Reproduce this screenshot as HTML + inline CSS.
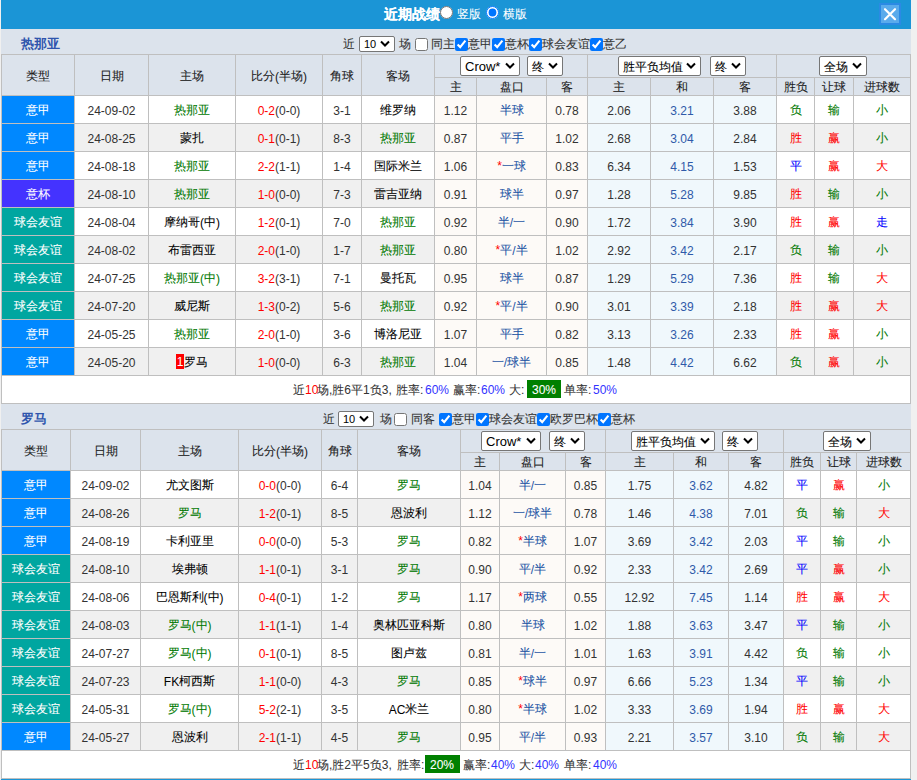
<!DOCTYPE html>
<html><head><meta charset="utf-8">
<style>
html,body{margin:0;padding:0;}
body{width:917px;height:780px;background:#f0f0f0;position:relative;overflow:hidden;font-family:"Liberation Sans",sans-serif;font-size:12px;color:#333;-webkit-text-stroke:0.08px;}
#panel{position:absolute;left:1px;top:0;width:910px;height:780px;background:#dce3ec;}
#title{position:absolute;left:1px;top:0;width:910px;height:29px;background:#1b95d6;}
.g{position:absolute;background:#bfbfbf;}
.c{position:absolute;text-align:center;white-space:nowrap;overflow:hidden;color:#000;}
.h{color:#1a1a1a;}
.d{color:#333;}
.t{font-weight:normal;position:relative;top:1px;}
.n{font-style:normal;position:relative;top:1px;-webkit-text-stroke:0;}
.sel{position:absolute;box-sizing:border-box;border:1px solid #767676;border-radius:2px;background:#fff;color:#000;white-space:nowrap;}
.sel span{position:absolute;top:0;}
.lat{-webkit-text-stroke:0;}
.sel svg{position:absolute;}
.lg{color:#fff;}
.pk{color:#1e55a5;}
.hb{color:#2f5aa9;}
.rk{display:inline-block;background:#ff0000;color:#fff;width:8px;height:15px;line-height:15px;vertical-align:middle;position:relative;top:-1px;}
.rk .n{top:1px;}
.a{position:absolute;white-space:nowrap;}
select{position:absolute;margin:0;font-family:"Liberation Sans",sans-serif;font-size:12px;padding:0 0 0 2px;color:#000;background:#fff;border:1px solid #767676;border-radius:3px;}
input{position:absolute;margin:0;width:13px;height:13px;}
.sm{text-align:center;}
.box{display:inline-block;background:#007800;color:#fff;padding:0 4px;height:17px;line-height:17px;}
.bl{color:#3333ff;}
.ast{color:#ff0000;top:-1px !important;}
.sx .n{top:0px;}
</style></head><body>
<div id="panel"></div>
<div id="title"></div>

<div class="a" style="left:384px;top:6px;font-size:14px;font-weight:bold;color:#fff;line-height:16px">近期战绩</div>
<input type="radio" style="left:440px;top:6px">
<div class="a" style="left:457px;top:6px;color:#fff;line-height:16px">竖版</div>
<input type="radio" checked style="left:486px;top:6px">
<div class="a" style="left:503px;top:6px;color:#fff;line-height:16px">横版</div>
<div class="a" style="left:879px;top:3px;width:22px;height:22px;box-sizing:border-box;background:#5aabec;border:2px solid #2b8ae4"></div>
<svg class="a" style="left:879px;top:3px" width="22" height="22" viewBox="0 0 22 22"><path d="M6 6.2 L16 16.2 M16 6.2 L6 16.2" stroke="#fff" stroke-width="2.2" stroke-linecap="round"/></svg>
<div class="a" style="left:21px;top:36px;font-size:13px;font-weight:bold;color:#2f55ad;line-height:16px;-webkit-text-stroke:0">热那亚</div>
<div class="a" style="left:343px;top:36px;line-height:16px">近</div>
<div class="sel" style="left:359px;top:36px;width:36px;height:16px;font-size:11px;line-height:14px"><span style="left:4px;top:0px;"><i class="lat" style="font-style:normal">10</i></span><svg style="left:20px;top:3px" width="10" height="8" viewBox="0 0 10 8"><path d="M1 1.5 L5 5.5 L9 1.5" fill="none" stroke="#000" stroke-width="2"/></svg></div>
<div class="a" style="left:399px;top:36px;line-height:16px">场</div>
<input type="checkbox" style="left:415px;top:38px">
<div class="a" style="left:431px;top:36px;line-height:16px">同主</div>
<input type="checkbox" checked style="left:455px;top:38px">
<div class="a" style="left:468px;top:36px;line-height:16px">意甲</div>
<input type="checkbox" checked style="left:492px;top:38px">
<div class="a" style="left:505px;top:36px;line-height:16px">意杯</div>
<input type="checkbox" checked style="left:529px;top:38px">
<div class="a" style="left:542px;top:36px;line-height:16px">球会友谊</div>
<input type="checkbox" checked style="left:590px;top:38px">
<div class="a" style="left:603px;top:36px;line-height:16px">意乙</div>
<div class="g" style="left:1px;top:54px;width:910px;height:350px"></div>
<div class="c h" style="left:2px;top:55px;width:72px;height:40px;line-height:40px;background:#dce3ec;"><b class="t">类型</b></div>
<div class="c h" style="left:75px;top:55px;width:73px;height:40px;line-height:40px;background:#dce3ec;"><b class="t">日期</b></div>
<div class="c h" style="left:149px;top:55px;width:86px;height:40px;line-height:40px;background:#dce3ec;"><b class="t">主场</b></div>
<div class="c h" style="left:236px;top:55px;width:86px;height:40px;line-height:40px;background:#dce3ec;"><b class="t">比分<i class="n">(</i>半场<i class="n">)</i></b></div>
<div class="c h" style="left:323px;top:55px;width:38px;height:40px;line-height:40px;background:#dce3ec;"><b class="t">角球</b></div>
<div class="c h" style="left:362px;top:55px;width:72px;height:40px;line-height:40px;background:#dce3ec;"><b class="t">客场</b></div>
<div class="c h" style="left:435px;top:55px;width:152px;height:22px;line-height:22px;background:#dce3ec;"><b class="t"></b></div>
<div class="c h" style="left:588px;top:55px;width:188px;height:22px;line-height:22px;background:#dce3ec;"><b class="t"></b></div>
<div class="c h" style="left:777px;top:55px;width:133px;height:22px;line-height:22px;background:#dce3ec;"><b class="t"></b></div>
<div class="c h s" style="left:435px;top:78px;width:41px;height:17px;line-height:17px;background:#dce3ec;"><b class="t">主</b></div>
<div class="c h s" style="left:477px;top:78px;width:69px;height:17px;line-height:17px;background:#dce3ec;"><b class="t">盘口</b></div>
<div class="c h s" style="left:547px;top:78px;width:40px;height:17px;line-height:17px;background:#dce3ec;"><b class="t">客</b></div>
<div class="c h s" style="left:588px;top:78px;width:62px;height:17px;line-height:17px;background:#dce3ec;"><b class="t">主</b></div>
<div class="c h s" style="left:651px;top:78px;width:62px;height:17px;line-height:17px;background:#dce3ec;"><b class="t">和</b></div>
<div class="c h s" style="left:714px;top:78px;width:62px;height:17px;line-height:17px;background:#dce3ec;"><b class="t">客</b></div>
<div class="c h s" style="left:777px;top:78px;width:37px;height:17px;line-height:17px;background:#dce3ec;"><b class="t">胜负</b></div>
<div class="c h s" style="left:815px;top:78px;width:38px;height:17px;line-height:17px;background:#dce3ec;"><b class="t">让球</b></div>
<div class="c h s" style="left:854px;top:78px;width:56px;height:17px;line-height:17px;background:#dce3ec;"><b class="t">进球数</b></div>
<div class="c lg" style="left:2px;top:96px;width:72px;height:27px;line-height:27px;background:#0088ff;"><b class="t">意甲</b></div>
<div class="c d" style="left:75px;top:96px;width:73px;height:27px;line-height:27px;background:#ffffff;"><b class="t"><i class="n">24-09-02</i></b></div>
<div class="c" style="left:149px;top:96px;width:86px;height:27px;line-height:27px;background:#ffffff;"><b class="t"><span style="color:#007800">热那亚</span></b></div>
<div class="c d" style="left:236px;top:96px;width:86px;height:27px;line-height:27px;background:#ffffff;"><b class="t"><span style="color:#ff0000"><i class="n">0-2</i></span><i class="n">(0-0)</i></b></div>
<div class="c d" style="left:323px;top:96px;width:38px;height:27px;line-height:27px;background:#ffffff;"><b class="t"><i class="n">3-1</i></b></div>
<div class="c" style="left:362px;top:96px;width:72px;height:27px;line-height:27px;background:#ffffff;"><b class="t">维罗纳</b></div>
<div class="c d" style="left:435px;top:96px;width:41px;height:27px;line-height:27px;background:#fdfaf7;"><b class="t"><i class="n">1.12</i></b></div>
<div class="c pk" style="left:477px;top:96px;width:69px;height:27px;line-height:27px;background:#fdfaf7;"><b class="t">半球</b></div>
<div class="c d" style="left:547px;top:96px;width:40px;height:27px;line-height:27px;background:#fdfaf7;"><b class="t"><i class="n">0.78</i></b></div>
<div class="c d" style="left:588px;top:96px;width:62px;height:27px;line-height:27px;background:#f0f8fc;"><b class="t"><i class="n">2.06</i></b></div>
<div class="c hb" style="left:651px;top:96px;width:62px;height:27px;line-height:27px;background:#f0f8fc;"><b class="t"><i class="n">3.21</i></b></div>
<div class="c d" style="left:714px;top:96px;width:62px;height:27px;line-height:27px;background:#f0f8fc;"><b class="t"><i class="n">3.88</i></b></div>
<div class="c" style="left:777px;top:96px;width:37px;height:27px;line-height:27px;background:#ffffff;"><b class="t"><span style="color:#007800">负</span></b></div>
<div class="c" style="left:815px;top:96px;width:38px;height:27px;line-height:27px;background:#ffffff;"><b class="t"><span style="color:#007800">输</span></b></div>
<div class="c" style="left:854px;top:96px;width:56px;height:27px;line-height:27px;background:#ffffff;"><b class="t"><span style="color:#007800">小</span></b></div>
<div class="c lg" style="left:2px;top:124px;width:72px;height:27px;line-height:27px;background:#0088ff;"><b class="t">意甲</b></div>
<div class="c d" style="left:75px;top:124px;width:73px;height:27px;line-height:27px;background:#f0f0f0;"><b class="t"><i class="n">24-08-25</i></b></div>
<div class="c" style="left:149px;top:124px;width:86px;height:27px;line-height:27px;background:#f0f0f0;"><b class="t">蒙扎</b></div>
<div class="c d" style="left:236px;top:124px;width:86px;height:27px;line-height:27px;background:#f0f0f0;"><b class="t"><span style="color:#ff0000"><i class="n">0-1</i></span><i class="n">(0-1)</i></b></div>
<div class="c d" style="left:323px;top:124px;width:38px;height:27px;line-height:27px;background:#f0f0f0;"><b class="t"><i class="n">8-3</i></b></div>
<div class="c" style="left:362px;top:124px;width:72px;height:27px;line-height:27px;background:#f0f0f0;"><b class="t"><span style="color:#007800">热那亚</span></b></div>
<div class="c d" style="left:435px;top:124px;width:41px;height:27px;line-height:27px;background:#fdfaf7;"><b class="t"><i class="n">0.87</i></b></div>
<div class="c pk" style="left:477px;top:124px;width:69px;height:27px;line-height:27px;background:#fdfaf7;"><b class="t">平手</b></div>
<div class="c d" style="left:547px;top:124px;width:40px;height:27px;line-height:27px;background:#fdfaf7;"><b class="t"><i class="n">1.02</i></b></div>
<div class="c d" style="left:588px;top:124px;width:62px;height:27px;line-height:27px;background:#f0f8fc;"><b class="t"><i class="n">2.68</i></b></div>
<div class="c hb" style="left:651px;top:124px;width:62px;height:27px;line-height:27px;background:#f0f8fc;"><b class="t"><i class="n">3.04</i></b></div>
<div class="c d" style="left:714px;top:124px;width:62px;height:27px;line-height:27px;background:#f0f8fc;"><b class="t"><i class="n">2.84</i></b></div>
<div class="c" style="left:777px;top:124px;width:37px;height:27px;line-height:27px;background:#f0f0f0;"><b class="t"><span style="color:#ff0000">胜</span></b></div>
<div class="c" style="left:815px;top:124px;width:38px;height:27px;line-height:27px;background:#f0f0f0;"><b class="t"><span style="color:#ff0000">赢</span></b></div>
<div class="c" style="left:854px;top:124px;width:56px;height:27px;line-height:27px;background:#f0f0f0;"><b class="t"><span style="color:#007800">小</span></b></div>
<div class="c lg" style="left:2px;top:152px;width:72px;height:27px;line-height:27px;background:#0088ff;"><b class="t">意甲</b></div>
<div class="c d" style="left:75px;top:152px;width:73px;height:27px;line-height:27px;background:#ffffff;"><b class="t"><i class="n">24-08-18</i></b></div>
<div class="c" style="left:149px;top:152px;width:86px;height:27px;line-height:27px;background:#ffffff;"><b class="t"><span style="color:#007800">热那亚</span></b></div>
<div class="c d" style="left:236px;top:152px;width:86px;height:27px;line-height:27px;background:#ffffff;"><b class="t"><span style="color:#ff0000"><i class="n">2-2</i></span><i class="n">(1-1)</i></b></div>
<div class="c d" style="left:323px;top:152px;width:38px;height:27px;line-height:27px;background:#ffffff;"><b class="t"><i class="n">1-4</i></b></div>
<div class="c" style="left:362px;top:152px;width:72px;height:27px;line-height:27px;background:#ffffff;"><b class="t">国际米兰</b></div>
<div class="c d" style="left:435px;top:152px;width:41px;height:27px;line-height:27px;background:#fdfaf7;"><b class="t"><i class="n">1.06</i></b></div>
<div class="c pk" style="left:477px;top:152px;width:69px;height:27px;line-height:27px;background:#fdfaf7;"><b class="t"><i class="n ast"><i class="n">*</i></i>一球</b></div>
<div class="c d" style="left:547px;top:152px;width:40px;height:27px;line-height:27px;background:#fdfaf7;"><b class="t"><i class="n">0.83</i></b></div>
<div class="c d" style="left:588px;top:152px;width:62px;height:27px;line-height:27px;background:#f0f8fc;"><b class="t"><i class="n">6.34</i></b></div>
<div class="c hb" style="left:651px;top:152px;width:62px;height:27px;line-height:27px;background:#f0f8fc;"><b class="t"><i class="n">4.15</i></b></div>
<div class="c d" style="left:714px;top:152px;width:62px;height:27px;line-height:27px;background:#f0f8fc;"><b class="t"><i class="n">1.53</i></b></div>
<div class="c" style="left:777px;top:152px;width:37px;height:27px;line-height:27px;background:#ffffff;"><b class="t"><span style="color:#0000ff">平</span></b></div>
<div class="c" style="left:815px;top:152px;width:38px;height:27px;line-height:27px;background:#ffffff;"><b class="t"><span style="color:#ff0000">赢</span></b></div>
<div class="c" style="left:854px;top:152px;width:56px;height:27px;line-height:27px;background:#ffffff;"><b class="t"><span style="color:#ff0000">大</span></b></div>
<div class="c lg" style="left:2px;top:180px;width:72px;height:27px;line-height:27px;background:#4433ff;"><b class="t">意杯</b></div>
<div class="c d" style="left:75px;top:180px;width:73px;height:27px;line-height:27px;background:#f0f0f0;"><b class="t"><i class="n">24-08-10</i></b></div>
<div class="c" style="left:149px;top:180px;width:86px;height:27px;line-height:27px;background:#f0f0f0;"><b class="t"><span style="color:#007800">热那亚</span></b></div>
<div class="c d" style="left:236px;top:180px;width:86px;height:27px;line-height:27px;background:#f0f0f0;"><b class="t"><span style="color:#ff0000"><i class="n">1-0</i></span><i class="n">(0-0)</i></b></div>
<div class="c d" style="left:323px;top:180px;width:38px;height:27px;line-height:27px;background:#f0f0f0;"><b class="t"><i class="n">7-3</i></b></div>
<div class="c" style="left:362px;top:180px;width:72px;height:27px;line-height:27px;background:#f0f0f0;"><b class="t">雷吉亚纳</b></div>
<div class="c d" style="left:435px;top:180px;width:41px;height:27px;line-height:27px;background:#fdfaf7;"><b class="t"><i class="n">0.91</i></b></div>
<div class="c pk" style="left:477px;top:180px;width:69px;height:27px;line-height:27px;background:#fdfaf7;"><b class="t">球半</b></div>
<div class="c d" style="left:547px;top:180px;width:40px;height:27px;line-height:27px;background:#fdfaf7;"><b class="t"><i class="n">0.97</i></b></div>
<div class="c d" style="left:588px;top:180px;width:62px;height:27px;line-height:27px;background:#f0f8fc;"><b class="t"><i class="n">1.28</i></b></div>
<div class="c hb" style="left:651px;top:180px;width:62px;height:27px;line-height:27px;background:#f0f8fc;"><b class="t"><i class="n">5.28</i></b></div>
<div class="c d" style="left:714px;top:180px;width:62px;height:27px;line-height:27px;background:#f0f8fc;"><b class="t"><i class="n">9.85</i></b></div>
<div class="c" style="left:777px;top:180px;width:37px;height:27px;line-height:27px;background:#f0f0f0;"><b class="t"><span style="color:#ff0000">胜</span></b></div>
<div class="c" style="left:815px;top:180px;width:38px;height:27px;line-height:27px;background:#f0f0f0;"><b class="t"><span style="color:#007800">输</span></b></div>
<div class="c" style="left:854px;top:180px;width:56px;height:27px;line-height:27px;background:#f0f0f0;"><b class="t"><span style="color:#007800">小</span></b></div>
<div class="c lg" style="left:2px;top:208px;width:72px;height:27px;line-height:27px;background:#00a6a0;"><b class="t">球会友谊</b></div>
<div class="c d" style="left:75px;top:208px;width:73px;height:27px;line-height:27px;background:#ffffff;"><b class="t"><i class="n">24-08-04</i></b></div>
<div class="c" style="left:149px;top:208px;width:86px;height:27px;line-height:27px;background:#ffffff;"><b class="t">摩纳哥<i class="n">(</i>中<i class="n">)</i></b></div>
<div class="c d" style="left:236px;top:208px;width:86px;height:27px;line-height:27px;background:#ffffff;"><b class="t"><span style="color:#ff0000"><i class="n">1-2</i></span><i class="n">(0-1)</i></b></div>
<div class="c d" style="left:323px;top:208px;width:38px;height:27px;line-height:27px;background:#ffffff;"><b class="t"><i class="n">7-0</i></b></div>
<div class="c" style="left:362px;top:208px;width:72px;height:27px;line-height:27px;background:#ffffff;"><b class="t"><span style="color:#007800">热那亚</span></b></div>
<div class="c d" style="left:435px;top:208px;width:41px;height:27px;line-height:27px;background:#fdfaf7;"><b class="t"><i class="n">0.92</i></b></div>
<div class="c pk" style="left:477px;top:208px;width:69px;height:27px;line-height:27px;background:#fdfaf7;"><b class="t">半<i class="n">/</i>一</b></div>
<div class="c d" style="left:547px;top:208px;width:40px;height:27px;line-height:27px;background:#fdfaf7;"><b class="t"><i class="n">0.90</i></b></div>
<div class="c d" style="left:588px;top:208px;width:62px;height:27px;line-height:27px;background:#f0f8fc;"><b class="t"><i class="n">1.72</i></b></div>
<div class="c hb" style="left:651px;top:208px;width:62px;height:27px;line-height:27px;background:#f0f8fc;"><b class="t"><i class="n">3.84</i></b></div>
<div class="c d" style="left:714px;top:208px;width:62px;height:27px;line-height:27px;background:#f0f8fc;"><b class="t"><i class="n">3.90</i></b></div>
<div class="c" style="left:777px;top:208px;width:37px;height:27px;line-height:27px;background:#ffffff;"><b class="t"><span style="color:#ff0000">胜</span></b></div>
<div class="c" style="left:815px;top:208px;width:38px;height:27px;line-height:27px;background:#ffffff;"><b class="t"><span style="color:#ff0000">赢</span></b></div>
<div class="c" style="left:854px;top:208px;width:56px;height:27px;line-height:27px;background:#ffffff;"><b class="t"><span style="color:#0000ff">走</span></b></div>
<div class="c lg" style="left:2px;top:236px;width:72px;height:27px;line-height:27px;background:#00a6a0;"><b class="t">球会友谊</b></div>
<div class="c d" style="left:75px;top:236px;width:73px;height:27px;line-height:27px;background:#f0f0f0;"><b class="t"><i class="n">24-08-02</i></b></div>
<div class="c" style="left:149px;top:236px;width:86px;height:27px;line-height:27px;background:#f0f0f0;"><b class="t">布雷西亚</b></div>
<div class="c d" style="left:236px;top:236px;width:86px;height:27px;line-height:27px;background:#f0f0f0;"><b class="t"><span style="color:#ff0000"><i class="n">2-0</i></span><i class="n">(1-0)</i></b></div>
<div class="c d" style="left:323px;top:236px;width:38px;height:27px;line-height:27px;background:#f0f0f0;"><b class="t"><i class="n">1-7</i></b></div>
<div class="c" style="left:362px;top:236px;width:72px;height:27px;line-height:27px;background:#f0f0f0;"><b class="t"><span style="color:#007800">热那亚</span></b></div>
<div class="c d" style="left:435px;top:236px;width:41px;height:27px;line-height:27px;background:#fdfaf7;"><b class="t"><i class="n">0.80</i></b></div>
<div class="c pk" style="left:477px;top:236px;width:69px;height:27px;line-height:27px;background:#fdfaf7;"><b class="t"><i class="n ast"><i class="n">*</i></i>平<i class="n">/</i>半</b></div>
<div class="c d" style="left:547px;top:236px;width:40px;height:27px;line-height:27px;background:#fdfaf7;"><b class="t"><i class="n">1.02</i></b></div>
<div class="c d" style="left:588px;top:236px;width:62px;height:27px;line-height:27px;background:#f0f8fc;"><b class="t"><i class="n">2.92</i></b></div>
<div class="c hb" style="left:651px;top:236px;width:62px;height:27px;line-height:27px;background:#f0f8fc;"><b class="t"><i class="n">3.42</i></b></div>
<div class="c d" style="left:714px;top:236px;width:62px;height:27px;line-height:27px;background:#f0f8fc;"><b class="t"><i class="n">2.17</i></b></div>
<div class="c" style="left:777px;top:236px;width:37px;height:27px;line-height:27px;background:#f0f0f0;"><b class="t"><span style="color:#007800">负</span></b></div>
<div class="c" style="left:815px;top:236px;width:38px;height:27px;line-height:27px;background:#f0f0f0;"><b class="t"><span style="color:#007800">输</span></b></div>
<div class="c" style="left:854px;top:236px;width:56px;height:27px;line-height:27px;background:#f0f0f0;"><b class="t"><span style="color:#007800">小</span></b></div>
<div class="c lg" style="left:2px;top:264px;width:72px;height:27px;line-height:27px;background:#00a6a0;"><b class="t">球会友谊</b></div>
<div class="c d" style="left:75px;top:264px;width:73px;height:27px;line-height:27px;background:#ffffff;"><b class="t"><i class="n">24-07-25</i></b></div>
<div class="c" style="left:149px;top:264px;width:86px;height:27px;line-height:27px;background:#ffffff;"><b class="t"><span style="color:#007800">热那亚<i class="n">(</i>中<i class="n">)</i></span></b></div>
<div class="c d" style="left:236px;top:264px;width:86px;height:27px;line-height:27px;background:#ffffff;"><b class="t"><span style="color:#ff0000"><i class="n">3-2</i></span><i class="n">(3-1)</i></b></div>
<div class="c d" style="left:323px;top:264px;width:38px;height:27px;line-height:27px;background:#ffffff;"><b class="t"><i class="n">7-1</i></b></div>
<div class="c" style="left:362px;top:264px;width:72px;height:27px;line-height:27px;background:#ffffff;"><b class="t">曼托瓦</b></div>
<div class="c d" style="left:435px;top:264px;width:41px;height:27px;line-height:27px;background:#fdfaf7;"><b class="t"><i class="n">0.95</i></b></div>
<div class="c pk" style="left:477px;top:264px;width:69px;height:27px;line-height:27px;background:#fdfaf7;"><b class="t">球半</b></div>
<div class="c d" style="left:547px;top:264px;width:40px;height:27px;line-height:27px;background:#fdfaf7;"><b class="t"><i class="n">0.87</i></b></div>
<div class="c d" style="left:588px;top:264px;width:62px;height:27px;line-height:27px;background:#f0f8fc;"><b class="t"><i class="n">1.29</i></b></div>
<div class="c hb" style="left:651px;top:264px;width:62px;height:27px;line-height:27px;background:#f0f8fc;"><b class="t"><i class="n">5.29</i></b></div>
<div class="c d" style="left:714px;top:264px;width:62px;height:27px;line-height:27px;background:#f0f8fc;"><b class="t"><i class="n">7.36</i></b></div>
<div class="c" style="left:777px;top:264px;width:37px;height:27px;line-height:27px;background:#ffffff;"><b class="t"><span style="color:#ff0000">胜</span></b></div>
<div class="c" style="left:815px;top:264px;width:38px;height:27px;line-height:27px;background:#ffffff;"><b class="t"><span style="color:#007800">输</span></b></div>
<div class="c" style="left:854px;top:264px;width:56px;height:27px;line-height:27px;background:#ffffff;"><b class="t"><span style="color:#ff0000">大</span></b></div>
<div class="c lg" style="left:2px;top:292px;width:72px;height:27px;line-height:27px;background:#00a6a0;"><b class="t">球会友谊</b></div>
<div class="c d" style="left:75px;top:292px;width:73px;height:27px;line-height:27px;background:#f0f0f0;"><b class="t"><i class="n">24-07-20</i></b></div>
<div class="c" style="left:149px;top:292px;width:86px;height:27px;line-height:27px;background:#f0f0f0;"><b class="t">威尼斯</b></div>
<div class="c d" style="left:236px;top:292px;width:86px;height:27px;line-height:27px;background:#f0f0f0;"><b class="t"><span style="color:#ff0000"><i class="n">1-3</i></span><i class="n">(0-2)</i></b></div>
<div class="c d" style="left:323px;top:292px;width:38px;height:27px;line-height:27px;background:#f0f0f0;"><b class="t"><i class="n">5-6</i></b></div>
<div class="c" style="left:362px;top:292px;width:72px;height:27px;line-height:27px;background:#f0f0f0;"><b class="t"><span style="color:#007800">热那亚</span></b></div>
<div class="c d" style="left:435px;top:292px;width:41px;height:27px;line-height:27px;background:#fdfaf7;"><b class="t"><i class="n">0.92</i></b></div>
<div class="c pk" style="left:477px;top:292px;width:69px;height:27px;line-height:27px;background:#fdfaf7;"><b class="t"><i class="n ast"><i class="n">*</i></i>平<i class="n">/</i>半</b></div>
<div class="c d" style="left:547px;top:292px;width:40px;height:27px;line-height:27px;background:#fdfaf7;"><b class="t"><i class="n">0.90</i></b></div>
<div class="c d" style="left:588px;top:292px;width:62px;height:27px;line-height:27px;background:#f0f8fc;"><b class="t"><i class="n">3.01</i></b></div>
<div class="c hb" style="left:651px;top:292px;width:62px;height:27px;line-height:27px;background:#f0f8fc;"><b class="t"><i class="n">3.39</i></b></div>
<div class="c d" style="left:714px;top:292px;width:62px;height:27px;line-height:27px;background:#f0f8fc;"><b class="t"><i class="n">2.18</i></b></div>
<div class="c" style="left:777px;top:292px;width:37px;height:27px;line-height:27px;background:#f0f0f0;"><b class="t"><span style="color:#ff0000">胜</span></b></div>
<div class="c" style="left:815px;top:292px;width:38px;height:27px;line-height:27px;background:#f0f0f0;"><b class="t"><span style="color:#ff0000">赢</span></b></div>
<div class="c" style="left:854px;top:292px;width:56px;height:27px;line-height:27px;background:#f0f0f0;"><b class="t"><span style="color:#ff0000">大</span></b></div>
<div class="c lg" style="left:2px;top:320px;width:72px;height:27px;line-height:27px;background:#0088ff;"><b class="t">意甲</b></div>
<div class="c d" style="left:75px;top:320px;width:73px;height:27px;line-height:27px;background:#ffffff;"><b class="t"><i class="n">24-05-25</i></b></div>
<div class="c" style="left:149px;top:320px;width:86px;height:27px;line-height:27px;background:#ffffff;"><b class="t"><span style="color:#007800">热那亚</span></b></div>
<div class="c d" style="left:236px;top:320px;width:86px;height:27px;line-height:27px;background:#ffffff;"><b class="t"><span style="color:#ff0000"><i class="n">2-0</i></span><i class="n">(1-0)</i></b></div>
<div class="c d" style="left:323px;top:320px;width:38px;height:27px;line-height:27px;background:#ffffff;"><b class="t"><i class="n">3-6</i></b></div>
<div class="c" style="left:362px;top:320px;width:72px;height:27px;line-height:27px;background:#ffffff;"><b class="t">博洛尼亚</b></div>
<div class="c d" style="left:435px;top:320px;width:41px;height:27px;line-height:27px;background:#fdfaf7;"><b class="t"><i class="n">1.07</i></b></div>
<div class="c pk" style="left:477px;top:320px;width:69px;height:27px;line-height:27px;background:#fdfaf7;"><b class="t">平手</b></div>
<div class="c d" style="left:547px;top:320px;width:40px;height:27px;line-height:27px;background:#fdfaf7;"><b class="t"><i class="n">0.82</i></b></div>
<div class="c d" style="left:588px;top:320px;width:62px;height:27px;line-height:27px;background:#f0f8fc;"><b class="t"><i class="n">3.13</i></b></div>
<div class="c hb" style="left:651px;top:320px;width:62px;height:27px;line-height:27px;background:#f0f8fc;"><b class="t"><i class="n">3.26</i></b></div>
<div class="c d" style="left:714px;top:320px;width:62px;height:27px;line-height:27px;background:#f0f8fc;"><b class="t"><i class="n">2.33</i></b></div>
<div class="c" style="left:777px;top:320px;width:37px;height:27px;line-height:27px;background:#ffffff;"><b class="t"><span style="color:#ff0000">胜</span></b></div>
<div class="c" style="left:815px;top:320px;width:38px;height:27px;line-height:27px;background:#ffffff;"><b class="t"><span style="color:#ff0000">赢</span></b></div>
<div class="c" style="left:854px;top:320px;width:56px;height:27px;line-height:27px;background:#ffffff;"><b class="t"><span style="color:#007800">小</span></b></div>
<div class="c lg" style="left:2px;top:348px;width:72px;height:27px;line-height:27px;background:#0088ff;"><b class="t">意甲</b></div>
<div class="c d" style="left:75px;top:348px;width:73px;height:27px;line-height:27px;background:#f0f0f0;"><b class="t"><i class="n">24-05-20</i></b></div>
<div class="c" style="left:149px;top:348px;width:86px;height:27px;line-height:27px;background:#f0f0f0;"><b class="t"><span class="rk"><i class="n">1</i></span>罗马</b></div>
<div class="c d" style="left:236px;top:348px;width:86px;height:27px;line-height:27px;background:#f0f0f0;"><b class="t"><span style="color:#ff0000"><i class="n">1-0</i></span><i class="n">(0-0)</i></b></div>
<div class="c d" style="left:323px;top:348px;width:38px;height:27px;line-height:27px;background:#f0f0f0;"><b class="t"><i class="n">6-3</i></b></div>
<div class="c" style="left:362px;top:348px;width:72px;height:27px;line-height:27px;background:#f0f0f0;"><b class="t"><span style="color:#007800">热那亚</span></b></div>
<div class="c d" style="left:435px;top:348px;width:41px;height:27px;line-height:27px;background:#fdfaf7;"><b class="t"><i class="n">1.04</i></b></div>
<div class="c pk" style="left:477px;top:348px;width:69px;height:27px;line-height:27px;background:#fdfaf7;"><b class="t">一<i class="n">/</i>球半</b></div>
<div class="c d" style="left:547px;top:348px;width:40px;height:27px;line-height:27px;background:#fdfaf7;"><b class="t"><i class="n">0.85</i></b></div>
<div class="c d" style="left:588px;top:348px;width:62px;height:27px;line-height:27px;background:#f0f8fc;"><b class="t"><i class="n">1.48</i></b></div>
<div class="c hb" style="left:651px;top:348px;width:62px;height:27px;line-height:27px;background:#f0f8fc;"><b class="t"><i class="n">4.42</i></b></div>
<div class="c d" style="left:714px;top:348px;width:62px;height:27px;line-height:27px;background:#f0f8fc;"><b class="t"><i class="n">6.62</i></b></div>
<div class="c" style="left:777px;top:348px;width:37px;height:27px;line-height:27px;background:#f0f0f0;"><b class="t"><span style="color:#007800">负</span></b></div>
<div class="c" style="left:815px;top:348px;width:38px;height:27px;line-height:27px;background:#f0f0f0;"><b class="t"><span style="color:#ff0000">赢</span></b></div>
<div class="c" style="left:854px;top:348px;width:56px;height:27px;line-height:27px;background:#f0f0f0;"><b class="t"><span style="color:#007800">小</span></b></div>
<div class="c sm" style="left:2px;top:376px;width:908px;height:27px;line-height:27px;background:#ffffff;"><b class="t"></b></div>
<div class="a sx" style="left:293px;top:381px;color:#333;line-height:18px">近</div>
<div class="a sx" style="left:305px;top:381px;color:#ff0000;line-height:18px"><i class="n">10</i></div>
<div class="a sx" style="left:317px;top:381px;color:#333;line-height:18px">场<i class="n">,</i>胜<i class="n">6</i>平<i class="n">1</i>负<i class="n">3,</i></div>
<div class="a sx" style="left:396px;top:381px;color:#333;line-height:18px">胜率<i class="n">:</i></div>
<div class="a sx" style="left:425px;top:381px;color:#3333ff;line-height:18px"><i class="n">60%</i></div>
<div class="a sx" style="left:453px;top:381px;color:#333;line-height:18px">赢率<i class="n">:</i></div>
<div class="a sx" style="left:481px;top:381px;color:#3333ff;line-height:18px"><i class="n">60%</i></div>
<div class="a sx" style="left:509px;top:381px;color:#333;line-height:18px">大<i class="n">:</i></div>
<div class="a" style="left:527px;top:380px;width:34px;height:18px;background:#008000"></div>
<div class="a sx" style="left:532px;top:381px;color:#fff;line-height:18px">30%</div>
<div class="a sx" style="left:564px;top:381px;color:#333;line-height:18px">单率<i class="n">:</i></div>
<div class="a sx" style="left:593px;top:381px;color:#3333ff;line-height:18px"><i class="n">50%</i></div>
<div class="sel" style="left:460px;top:56px;width:60px;height:20px;font-size:13px;line-height:18px"><span style="left:4px;top:1px;"><i class="lat" style="font-style:normal">Crow*</i></span><svg style="left:44px;top:5px" width="10" height="8" viewBox="0 0 10 8"><path d="M1 1.5 L5 5.5 L9 1.5" fill="none" stroke="#000" stroke-width="2"/></svg></div>
<div class="sel" style="left:527px;top:56px;width:36px;height:20px;font-size:12px;line-height:18px"><span style="left:4px;top:1px;">终</span><svg style="left:20px;top:5px" width="10" height="8" viewBox="0 0 10 8"><path d="M1 1.5 L5 5.5 L9 1.5" fill="none" stroke="#000" stroke-width="2"/></svg></div>
<div class="sel" style="left:618px;top:56px;width:83px;height:20px;font-size:12px;line-height:18px"><span style="left:4px;top:1px;">胜平负均值</span><svg style="left:67px;top:5px" width="10" height="8" viewBox="0 0 10 8"><path d="M1 1.5 L5 5.5 L9 1.5" fill="none" stroke="#000" stroke-width="2"/></svg></div>
<div class="sel" style="left:710px;top:56px;width:36px;height:20px;font-size:12px;line-height:18px"><span style="left:4px;top:1px;">终</span><svg style="left:20px;top:5px" width="10" height="8" viewBox="0 0 10 8"><path d="M1 1.5 L5 5.5 L9 1.5" fill="none" stroke="#000" stroke-width="2"/></svg></div>
<div class="sel" style="left:819px;top:56px;width:48px;height:20px;font-size:12px;line-height:18px"><span style="left:4px;top:1px;">全场</span><svg style="left:32px;top:5px" width="10" height="8" viewBox="0 0 10 8"><path d="M1 1.5 L5 5.5 L9 1.5" fill="none" stroke="#000" stroke-width="2"/></svg></div>
<div class="a" style="left:21px;top:411px;font-size:13px;font-weight:bold;color:#2f55ad;line-height:16px;-webkit-text-stroke:0">罗马</div>
<div class="a" style="left:323px;top:411px;line-height:16px">近</div>
<div class="sel" style="left:338px;top:411px;width:36px;height:16px;font-size:11px;line-height:14px"><span style="left:4px;top:0px;"><i class="lat" style="font-style:normal">10</i></span><svg style="left:20px;top:3px" width="10" height="8" viewBox="0 0 10 8"><path d="M1 1.5 L5 5.5 L9 1.5" fill="none" stroke="#000" stroke-width="2"/></svg></div>
<div class="a" style="left:380px;top:411px;line-height:16px">场</div>
<input type="checkbox" style="left:394px;top:413px">
<div class="a" style="left:411px;top:411px;line-height:16px">同客</div>
<input type="checkbox" checked style="left:439px;top:413px">
<div class="a" style="left:452px;top:411px;line-height:16px">意甲</div>
<input type="checkbox" checked style="left:476px;top:413px">
<div class="a" style="left:489px;top:411px;line-height:16px">球会友谊</div>
<input type="checkbox" checked style="left:537px;top:413px">
<div class="a" style="left:550px;top:411px;line-height:16px">欧罗巴杯</div>
<input type="checkbox" checked style="left:598px;top:413px">
<div class="a" style="left:611px;top:411px;line-height:16px">意杯</div>
<div class="g" style="left:1px;top:429px;width:910px;height:350px"></div>
<div class="c h" style="left:2px;top:430px;width:68px;height:40px;line-height:40px;background:#dce3ec;"><b class="t">类型</b></div>
<div class="c h" style="left:71px;top:430px;width:69px;height:40px;line-height:40px;background:#dce3ec;"><b class="t">日期</b></div>
<div class="c h" style="left:141px;top:430px;width:97px;height:40px;line-height:40px;background:#dce3ec;"><b class="t">主场</b></div>
<div class="c h" style="left:239px;top:430px;width:82px;height:40px;line-height:40px;background:#dce3ec;"><b class="t">比分<i class="n">(</i>半场<i class="n">)</i></b></div>
<div class="c h" style="left:322px;top:430px;width:35px;height:40px;line-height:40px;background:#dce3ec;"><b class="t">角球</b></div>
<div class="c h" style="left:358px;top:430px;width:102px;height:40px;line-height:40px;background:#dce3ec;"><b class="t">客场</b></div>
<div class="c h" style="left:461px;top:430px;width:144px;height:22px;line-height:22px;background:#dce3ec;"><b class="t"></b></div>
<div class="c h" style="left:606px;top:430px;width:177px;height:22px;line-height:22px;background:#dce3ec;"><b class="t"></b></div>
<div class="c h" style="left:784px;top:430px;width:126px;height:22px;line-height:22px;background:#dce3ec;"><b class="t"></b></div>
<div class="c h s" style="left:461px;top:453px;width:38px;height:17px;line-height:17px;background:#dce3ec;"><b class="t">主</b></div>
<div class="c h s" style="left:500px;top:453px;width:65px;height:17px;line-height:17px;background:#dce3ec;"><b class="t">盘口</b></div>
<div class="c h s" style="left:566px;top:453px;width:39px;height:17px;line-height:17px;background:#dce3ec;"><b class="t">客</b></div>
<div class="c h s" style="left:606px;top:453px;width:67px;height:17px;line-height:17px;background:#dce3ec;"><b class="t">主</b></div>
<div class="c h s" style="left:674px;top:453px;width:54px;height:17px;line-height:17px;background:#dce3ec;"><b class="t">和</b></div>
<div class="c h s" style="left:729px;top:453px;width:54px;height:17px;line-height:17px;background:#dce3ec;"><b class="t">客</b></div>
<div class="c h s" style="left:784px;top:453px;width:36px;height:17px;line-height:17px;background:#dce3ec;"><b class="t">胜负</b></div>
<div class="c h s" style="left:821px;top:453px;width:35px;height:17px;line-height:17px;background:#dce3ec;"><b class="t">让球</b></div>
<div class="c h s" style="left:857px;top:453px;width:53px;height:17px;line-height:17px;background:#dce3ec;"><b class="t">进球数</b></div>
<div class="c lg" style="left:2px;top:471px;width:68px;height:27px;line-height:27px;background:#0088ff;"><b class="t">意甲</b></div>
<div class="c d" style="left:71px;top:471px;width:69px;height:27px;line-height:27px;background:#ffffff;"><b class="t"><i class="n">24-09-02</i></b></div>
<div class="c" style="left:141px;top:471px;width:97px;height:27px;line-height:27px;background:#ffffff;"><b class="t">尤文图斯</b></div>
<div class="c d" style="left:239px;top:471px;width:82px;height:27px;line-height:27px;background:#ffffff;"><b class="t"><span style="color:#ff0000"><i class="n">0-0</i></span><i class="n">(0-0)</i></b></div>
<div class="c d" style="left:322px;top:471px;width:35px;height:27px;line-height:27px;background:#ffffff;"><b class="t"><i class="n">6-4</i></b></div>
<div class="c" style="left:358px;top:471px;width:102px;height:27px;line-height:27px;background:#ffffff;"><b class="t"><span style="color:#007800">罗马</span></b></div>
<div class="c d" style="left:461px;top:471px;width:38px;height:27px;line-height:27px;background:#fdfaf7;"><b class="t"><i class="n">1.04</i></b></div>
<div class="c pk" style="left:500px;top:471px;width:65px;height:27px;line-height:27px;background:#fdfaf7;"><b class="t">半<i class="n">/</i>一</b></div>
<div class="c d" style="left:566px;top:471px;width:39px;height:27px;line-height:27px;background:#fdfaf7;"><b class="t"><i class="n">0.85</i></b></div>
<div class="c d" style="left:606px;top:471px;width:67px;height:27px;line-height:27px;background:#f0f8fc;"><b class="t"><i class="n">1.75</i></b></div>
<div class="c hb" style="left:674px;top:471px;width:54px;height:27px;line-height:27px;background:#f0f8fc;"><b class="t"><i class="n">3.62</i></b></div>
<div class="c d" style="left:729px;top:471px;width:54px;height:27px;line-height:27px;background:#f0f8fc;"><b class="t"><i class="n">4.82</i></b></div>
<div class="c" style="left:784px;top:471px;width:36px;height:27px;line-height:27px;background:#ffffff;"><b class="t"><span style="color:#0000ff">平</span></b></div>
<div class="c" style="left:821px;top:471px;width:35px;height:27px;line-height:27px;background:#ffffff;"><b class="t"><span style="color:#ff0000">赢</span></b></div>
<div class="c" style="left:857px;top:471px;width:53px;height:27px;line-height:27px;background:#ffffff;"><b class="t"><span style="color:#007800">小</span></b></div>
<div class="c lg" style="left:2px;top:499px;width:68px;height:27px;line-height:27px;background:#0088ff;"><b class="t">意甲</b></div>
<div class="c d" style="left:71px;top:499px;width:69px;height:27px;line-height:27px;background:#f0f0f0;"><b class="t"><i class="n">24-08-26</i></b></div>
<div class="c" style="left:141px;top:499px;width:97px;height:27px;line-height:27px;background:#f0f0f0;"><b class="t"><span style="color:#007800">罗马</span></b></div>
<div class="c d" style="left:239px;top:499px;width:82px;height:27px;line-height:27px;background:#f0f0f0;"><b class="t"><span style="color:#ff0000"><i class="n">1-2</i></span><i class="n">(0-1)</i></b></div>
<div class="c d" style="left:322px;top:499px;width:35px;height:27px;line-height:27px;background:#f0f0f0;"><b class="t"><i class="n">8-5</i></b></div>
<div class="c" style="left:358px;top:499px;width:102px;height:27px;line-height:27px;background:#f0f0f0;"><b class="t">恩波利</b></div>
<div class="c d" style="left:461px;top:499px;width:38px;height:27px;line-height:27px;background:#fdfaf7;"><b class="t"><i class="n">1.12</i></b></div>
<div class="c pk" style="left:500px;top:499px;width:65px;height:27px;line-height:27px;background:#fdfaf7;"><b class="t">一<i class="n">/</i>球半</b></div>
<div class="c d" style="left:566px;top:499px;width:39px;height:27px;line-height:27px;background:#fdfaf7;"><b class="t"><i class="n">0.78</i></b></div>
<div class="c d" style="left:606px;top:499px;width:67px;height:27px;line-height:27px;background:#f0f8fc;"><b class="t"><i class="n">1.46</i></b></div>
<div class="c hb" style="left:674px;top:499px;width:54px;height:27px;line-height:27px;background:#f0f8fc;"><b class="t"><i class="n">4.38</i></b></div>
<div class="c d" style="left:729px;top:499px;width:54px;height:27px;line-height:27px;background:#f0f8fc;"><b class="t"><i class="n">7.01</i></b></div>
<div class="c" style="left:784px;top:499px;width:36px;height:27px;line-height:27px;background:#f0f0f0;"><b class="t"><span style="color:#007800">负</span></b></div>
<div class="c" style="left:821px;top:499px;width:35px;height:27px;line-height:27px;background:#f0f0f0;"><b class="t"><span style="color:#007800">输</span></b></div>
<div class="c" style="left:857px;top:499px;width:53px;height:27px;line-height:27px;background:#f0f0f0;"><b class="t"><span style="color:#ff0000">大</span></b></div>
<div class="c lg" style="left:2px;top:527px;width:68px;height:27px;line-height:27px;background:#0088ff;"><b class="t">意甲</b></div>
<div class="c d" style="left:71px;top:527px;width:69px;height:27px;line-height:27px;background:#ffffff;"><b class="t"><i class="n">24-08-19</i></b></div>
<div class="c" style="left:141px;top:527px;width:97px;height:27px;line-height:27px;background:#ffffff;"><b class="t">卡利亚里</b></div>
<div class="c d" style="left:239px;top:527px;width:82px;height:27px;line-height:27px;background:#ffffff;"><b class="t"><span style="color:#ff0000"><i class="n">0-0</i></span><i class="n">(0-0)</i></b></div>
<div class="c d" style="left:322px;top:527px;width:35px;height:27px;line-height:27px;background:#ffffff;"><b class="t"><i class="n">5-3</i></b></div>
<div class="c" style="left:358px;top:527px;width:102px;height:27px;line-height:27px;background:#ffffff;"><b class="t"><span style="color:#007800">罗马</span></b></div>
<div class="c d" style="left:461px;top:527px;width:38px;height:27px;line-height:27px;background:#fdfaf7;"><b class="t"><i class="n">0.82</i></b></div>
<div class="c pk" style="left:500px;top:527px;width:65px;height:27px;line-height:27px;background:#fdfaf7;"><b class="t"><i class="n ast"><i class="n">*</i></i>半球</b></div>
<div class="c d" style="left:566px;top:527px;width:39px;height:27px;line-height:27px;background:#fdfaf7;"><b class="t"><i class="n">1.07</i></b></div>
<div class="c d" style="left:606px;top:527px;width:67px;height:27px;line-height:27px;background:#f0f8fc;"><b class="t"><i class="n">3.69</i></b></div>
<div class="c hb" style="left:674px;top:527px;width:54px;height:27px;line-height:27px;background:#f0f8fc;"><b class="t"><i class="n">3.42</i></b></div>
<div class="c d" style="left:729px;top:527px;width:54px;height:27px;line-height:27px;background:#f0f8fc;"><b class="t"><i class="n">2.03</i></b></div>
<div class="c" style="left:784px;top:527px;width:36px;height:27px;line-height:27px;background:#ffffff;"><b class="t"><span style="color:#0000ff">平</span></b></div>
<div class="c" style="left:821px;top:527px;width:35px;height:27px;line-height:27px;background:#ffffff;"><b class="t"><span style="color:#007800">输</span></b></div>
<div class="c" style="left:857px;top:527px;width:53px;height:27px;line-height:27px;background:#ffffff;"><b class="t"><span style="color:#007800">小</span></b></div>
<div class="c lg" style="left:2px;top:555px;width:68px;height:27px;line-height:27px;background:#00a6a0;"><b class="t">球会友谊</b></div>
<div class="c d" style="left:71px;top:555px;width:69px;height:27px;line-height:27px;background:#f0f0f0;"><b class="t"><i class="n">24-08-10</i></b></div>
<div class="c" style="left:141px;top:555px;width:97px;height:27px;line-height:27px;background:#f0f0f0;"><b class="t">埃弗顿</b></div>
<div class="c d" style="left:239px;top:555px;width:82px;height:27px;line-height:27px;background:#f0f0f0;"><b class="t"><span style="color:#ff0000"><i class="n">1-1</i></span><i class="n">(0-1)</i></b></div>
<div class="c d" style="left:322px;top:555px;width:35px;height:27px;line-height:27px;background:#f0f0f0;"><b class="t"><i class="n">3-1</i></b></div>
<div class="c" style="left:358px;top:555px;width:102px;height:27px;line-height:27px;background:#f0f0f0;"><b class="t"><span style="color:#007800">罗马</span></b></div>
<div class="c d" style="left:461px;top:555px;width:38px;height:27px;line-height:27px;background:#fdfaf7;"><b class="t"><i class="n">0.90</i></b></div>
<div class="c pk" style="left:500px;top:555px;width:65px;height:27px;line-height:27px;background:#fdfaf7;"><b class="t">平<i class="n">/</i>半</b></div>
<div class="c d" style="left:566px;top:555px;width:39px;height:27px;line-height:27px;background:#fdfaf7;"><b class="t"><i class="n">0.92</i></b></div>
<div class="c d" style="left:606px;top:555px;width:67px;height:27px;line-height:27px;background:#f0f8fc;"><b class="t"><i class="n">2.33</i></b></div>
<div class="c hb" style="left:674px;top:555px;width:54px;height:27px;line-height:27px;background:#f0f8fc;"><b class="t"><i class="n">3.42</i></b></div>
<div class="c d" style="left:729px;top:555px;width:54px;height:27px;line-height:27px;background:#f0f8fc;"><b class="t"><i class="n">2.69</i></b></div>
<div class="c" style="left:784px;top:555px;width:36px;height:27px;line-height:27px;background:#f0f0f0;"><b class="t"><span style="color:#0000ff">平</span></b></div>
<div class="c" style="left:821px;top:555px;width:35px;height:27px;line-height:27px;background:#f0f0f0;"><b class="t"><span style="color:#ff0000">赢</span></b></div>
<div class="c" style="left:857px;top:555px;width:53px;height:27px;line-height:27px;background:#f0f0f0;"><b class="t"><span style="color:#007800">小</span></b></div>
<div class="c lg" style="left:2px;top:583px;width:68px;height:27px;line-height:27px;background:#00a6a0;"><b class="t">球会友谊</b></div>
<div class="c d" style="left:71px;top:583px;width:69px;height:27px;line-height:27px;background:#ffffff;"><b class="t"><i class="n">24-08-06</i></b></div>
<div class="c" style="left:141px;top:583px;width:97px;height:27px;line-height:27px;background:#ffffff;"><b class="t">巴恩斯利<i class="n">(</i>中<i class="n">)</i></b></div>
<div class="c d" style="left:239px;top:583px;width:82px;height:27px;line-height:27px;background:#ffffff;"><b class="t"><span style="color:#ff0000"><i class="n">0-4</i></span><i class="n">(0-1)</i></b></div>
<div class="c d" style="left:322px;top:583px;width:35px;height:27px;line-height:27px;background:#ffffff;"><b class="t"><i class="n">1-2</i></b></div>
<div class="c" style="left:358px;top:583px;width:102px;height:27px;line-height:27px;background:#ffffff;"><b class="t"><span style="color:#007800">罗马</span></b></div>
<div class="c d" style="left:461px;top:583px;width:38px;height:27px;line-height:27px;background:#fdfaf7;"><b class="t"><i class="n">1.17</i></b></div>
<div class="c pk" style="left:500px;top:583px;width:65px;height:27px;line-height:27px;background:#fdfaf7;"><b class="t"><i class="n ast"><i class="n">*</i></i>两球</b></div>
<div class="c d" style="left:566px;top:583px;width:39px;height:27px;line-height:27px;background:#fdfaf7;"><b class="t"><i class="n">0.55</i></b></div>
<div class="c d" style="left:606px;top:583px;width:67px;height:27px;line-height:27px;background:#f0f8fc;"><b class="t"><i class="n">12.92</i></b></div>
<div class="c hb" style="left:674px;top:583px;width:54px;height:27px;line-height:27px;background:#f0f8fc;"><b class="t"><i class="n">7.45</i></b></div>
<div class="c d" style="left:729px;top:583px;width:54px;height:27px;line-height:27px;background:#f0f8fc;"><b class="t"><i class="n">1.14</i></b></div>
<div class="c" style="left:784px;top:583px;width:36px;height:27px;line-height:27px;background:#ffffff;"><b class="t"><span style="color:#ff0000">胜</span></b></div>
<div class="c" style="left:821px;top:583px;width:35px;height:27px;line-height:27px;background:#ffffff;"><b class="t"><span style="color:#ff0000">赢</span></b></div>
<div class="c" style="left:857px;top:583px;width:53px;height:27px;line-height:27px;background:#ffffff;"><b class="t"><span style="color:#ff0000">大</span></b></div>
<div class="c lg" style="left:2px;top:611px;width:68px;height:27px;line-height:27px;background:#00a6a0;"><b class="t">球会友谊</b></div>
<div class="c d" style="left:71px;top:611px;width:69px;height:27px;line-height:27px;background:#f0f0f0;"><b class="t"><i class="n">24-08-03</i></b></div>
<div class="c" style="left:141px;top:611px;width:97px;height:27px;line-height:27px;background:#f0f0f0;"><b class="t"><span style="color:#007800">罗马<i class="n">(</i>中<i class="n">)</i></span></b></div>
<div class="c d" style="left:239px;top:611px;width:82px;height:27px;line-height:27px;background:#f0f0f0;"><b class="t"><span style="color:#ff0000"><i class="n">1-1</i></span><i class="n">(1-1)</i></b></div>
<div class="c d" style="left:322px;top:611px;width:35px;height:27px;line-height:27px;background:#f0f0f0;"><b class="t"><i class="n">1-4</i></b></div>
<div class="c" style="left:358px;top:611px;width:102px;height:27px;line-height:27px;background:#f0f0f0;"><b class="t">奥林匹亚科斯</b></div>
<div class="c d" style="left:461px;top:611px;width:38px;height:27px;line-height:27px;background:#fdfaf7;"><b class="t"><i class="n">0.80</i></b></div>
<div class="c pk" style="left:500px;top:611px;width:65px;height:27px;line-height:27px;background:#fdfaf7;"><b class="t">半球</b></div>
<div class="c d" style="left:566px;top:611px;width:39px;height:27px;line-height:27px;background:#fdfaf7;"><b class="t"><i class="n">1.02</i></b></div>
<div class="c d" style="left:606px;top:611px;width:67px;height:27px;line-height:27px;background:#f0f8fc;"><b class="t"><i class="n">1.88</i></b></div>
<div class="c hb" style="left:674px;top:611px;width:54px;height:27px;line-height:27px;background:#f0f8fc;"><b class="t"><i class="n">3.63</i></b></div>
<div class="c d" style="left:729px;top:611px;width:54px;height:27px;line-height:27px;background:#f0f8fc;"><b class="t"><i class="n">3.47</i></b></div>
<div class="c" style="left:784px;top:611px;width:36px;height:27px;line-height:27px;background:#f0f0f0;"><b class="t"><span style="color:#0000ff">平</span></b></div>
<div class="c" style="left:821px;top:611px;width:35px;height:27px;line-height:27px;background:#f0f0f0;"><b class="t"><span style="color:#007800">输</span></b></div>
<div class="c" style="left:857px;top:611px;width:53px;height:27px;line-height:27px;background:#f0f0f0;"><b class="t"><span style="color:#007800">小</span></b></div>
<div class="c lg" style="left:2px;top:639px;width:68px;height:27px;line-height:27px;background:#00a6a0;"><b class="t">球会友谊</b></div>
<div class="c d" style="left:71px;top:639px;width:69px;height:27px;line-height:27px;background:#ffffff;"><b class="t"><i class="n">24-07-27</i></b></div>
<div class="c" style="left:141px;top:639px;width:97px;height:27px;line-height:27px;background:#ffffff;"><b class="t"><span style="color:#007800">罗马<i class="n">(</i>中<i class="n">)</i></span></b></div>
<div class="c d" style="left:239px;top:639px;width:82px;height:27px;line-height:27px;background:#ffffff;"><b class="t"><span style="color:#ff0000"><i class="n">0-1</i></span><i class="n">(0-1)</i></b></div>
<div class="c d" style="left:322px;top:639px;width:35px;height:27px;line-height:27px;background:#ffffff;"><b class="t"><i class="n">8-5</i></b></div>
<div class="c" style="left:358px;top:639px;width:102px;height:27px;line-height:27px;background:#ffffff;"><b class="t">图卢兹</b></div>
<div class="c d" style="left:461px;top:639px;width:38px;height:27px;line-height:27px;background:#fdfaf7;"><b class="t"><i class="n">0.81</i></b></div>
<div class="c pk" style="left:500px;top:639px;width:65px;height:27px;line-height:27px;background:#fdfaf7;"><b class="t">半<i class="n">/</i>一</b></div>
<div class="c d" style="left:566px;top:639px;width:39px;height:27px;line-height:27px;background:#fdfaf7;"><b class="t"><i class="n">1.01</i></b></div>
<div class="c d" style="left:606px;top:639px;width:67px;height:27px;line-height:27px;background:#f0f8fc;"><b class="t"><i class="n">1.63</i></b></div>
<div class="c hb" style="left:674px;top:639px;width:54px;height:27px;line-height:27px;background:#f0f8fc;"><b class="t"><i class="n">3.91</i></b></div>
<div class="c d" style="left:729px;top:639px;width:54px;height:27px;line-height:27px;background:#f0f8fc;"><b class="t"><i class="n">4.42</i></b></div>
<div class="c" style="left:784px;top:639px;width:36px;height:27px;line-height:27px;background:#ffffff;"><b class="t"><span style="color:#007800">负</span></b></div>
<div class="c" style="left:821px;top:639px;width:35px;height:27px;line-height:27px;background:#ffffff;"><b class="t"><span style="color:#007800">输</span></b></div>
<div class="c" style="left:857px;top:639px;width:53px;height:27px;line-height:27px;background:#ffffff;"><b class="t"><span style="color:#007800">小</span></b></div>
<div class="c lg" style="left:2px;top:667px;width:68px;height:27px;line-height:27px;background:#00a6a0;"><b class="t">球会友谊</b></div>
<div class="c d" style="left:71px;top:667px;width:69px;height:27px;line-height:27px;background:#f0f0f0;"><b class="t"><i class="n">24-07-23</i></b></div>
<div class="c" style="left:141px;top:667px;width:97px;height:27px;line-height:27px;background:#f0f0f0;"><b class="t"><i class="n">FK</i>柯西斯</b></div>
<div class="c d" style="left:239px;top:667px;width:82px;height:27px;line-height:27px;background:#f0f0f0;"><b class="t"><span style="color:#ff0000"><i class="n">1-1</i></span><i class="n">(0-0)</i></b></div>
<div class="c d" style="left:322px;top:667px;width:35px;height:27px;line-height:27px;background:#f0f0f0;"><b class="t"><i class="n">4-3</i></b></div>
<div class="c" style="left:358px;top:667px;width:102px;height:27px;line-height:27px;background:#f0f0f0;"><b class="t"><span style="color:#007800">罗马</span></b></div>
<div class="c d" style="left:461px;top:667px;width:38px;height:27px;line-height:27px;background:#fdfaf7;"><b class="t"><i class="n">0.85</i></b></div>
<div class="c pk" style="left:500px;top:667px;width:65px;height:27px;line-height:27px;background:#fdfaf7;"><b class="t"><i class="n ast"><i class="n">*</i></i>球半</b></div>
<div class="c d" style="left:566px;top:667px;width:39px;height:27px;line-height:27px;background:#fdfaf7;"><b class="t"><i class="n">0.97</i></b></div>
<div class="c d" style="left:606px;top:667px;width:67px;height:27px;line-height:27px;background:#f0f8fc;"><b class="t"><i class="n">6.66</i></b></div>
<div class="c hb" style="left:674px;top:667px;width:54px;height:27px;line-height:27px;background:#f0f8fc;"><b class="t"><i class="n">5.23</i></b></div>
<div class="c d" style="left:729px;top:667px;width:54px;height:27px;line-height:27px;background:#f0f8fc;"><b class="t"><i class="n">1.34</i></b></div>
<div class="c" style="left:784px;top:667px;width:36px;height:27px;line-height:27px;background:#f0f0f0;"><b class="t"><span style="color:#0000ff">平</span></b></div>
<div class="c" style="left:821px;top:667px;width:35px;height:27px;line-height:27px;background:#f0f0f0;"><b class="t"><span style="color:#007800">输</span></b></div>
<div class="c" style="left:857px;top:667px;width:53px;height:27px;line-height:27px;background:#f0f0f0;"><b class="t"><span style="color:#007800">小</span></b></div>
<div class="c lg" style="left:2px;top:695px;width:68px;height:27px;line-height:27px;background:#00a6a0;"><b class="t">球会友谊</b></div>
<div class="c d" style="left:71px;top:695px;width:69px;height:27px;line-height:27px;background:#ffffff;"><b class="t"><i class="n">24-05-31</i></b></div>
<div class="c" style="left:141px;top:695px;width:97px;height:27px;line-height:27px;background:#ffffff;"><b class="t"><span style="color:#007800">罗马<i class="n">(</i>中<i class="n">)</i></span></b></div>
<div class="c d" style="left:239px;top:695px;width:82px;height:27px;line-height:27px;background:#ffffff;"><b class="t"><span style="color:#ff0000"><i class="n">5-2</i></span><i class="n">(2-1)</i></b></div>
<div class="c d" style="left:322px;top:695px;width:35px;height:27px;line-height:27px;background:#ffffff;"><b class="t"><i class="n">3-5</i></b></div>
<div class="c" style="left:358px;top:695px;width:102px;height:27px;line-height:27px;background:#ffffff;"><b class="t"><i class="n">AC</i>米兰</b></div>
<div class="c d" style="left:461px;top:695px;width:38px;height:27px;line-height:27px;background:#fdfaf7;"><b class="t"><i class="n">0.80</i></b></div>
<div class="c pk" style="left:500px;top:695px;width:65px;height:27px;line-height:27px;background:#fdfaf7;"><b class="t"><i class="n ast"><i class="n">*</i></i>半球</b></div>
<div class="c d" style="left:566px;top:695px;width:39px;height:27px;line-height:27px;background:#fdfaf7;"><b class="t"><i class="n">1.02</i></b></div>
<div class="c d" style="left:606px;top:695px;width:67px;height:27px;line-height:27px;background:#f0f8fc;"><b class="t"><i class="n">3.33</i></b></div>
<div class="c hb" style="left:674px;top:695px;width:54px;height:27px;line-height:27px;background:#f0f8fc;"><b class="t"><i class="n">3.69</i></b></div>
<div class="c d" style="left:729px;top:695px;width:54px;height:27px;line-height:27px;background:#f0f8fc;"><b class="t"><i class="n">1.94</i></b></div>
<div class="c" style="left:784px;top:695px;width:36px;height:27px;line-height:27px;background:#ffffff;"><b class="t"><span style="color:#ff0000">胜</span></b></div>
<div class="c" style="left:821px;top:695px;width:35px;height:27px;line-height:27px;background:#ffffff;"><b class="t"><span style="color:#ff0000">赢</span></b></div>
<div class="c" style="left:857px;top:695px;width:53px;height:27px;line-height:27px;background:#ffffff;"><b class="t"><span style="color:#ff0000">大</span></b></div>
<div class="c lg" style="left:2px;top:723px;width:68px;height:27px;line-height:27px;background:#0088ff;"><b class="t">意甲</b></div>
<div class="c d" style="left:71px;top:723px;width:69px;height:27px;line-height:27px;background:#f0f0f0;"><b class="t"><i class="n">24-05-27</i></b></div>
<div class="c" style="left:141px;top:723px;width:97px;height:27px;line-height:27px;background:#f0f0f0;"><b class="t">恩波利</b></div>
<div class="c d" style="left:239px;top:723px;width:82px;height:27px;line-height:27px;background:#f0f0f0;"><b class="t"><span style="color:#ff0000"><i class="n">2-1</i></span><i class="n">(1-1)</i></b></div>
<div class="c d" style="left:322px;top:723px;width:35px;height:27px;line-height:27px;background:#f0f0f0;"><b class="t"><i class="n">4-5</i></b></div>
<div class="c" style="left:358px;top:723px;width:102px;height:27px;line-height:27px;background:#f0f0f0;"><b class="t"><span style="color:#007800">罗马</span></b></div>
<div class="c d" style="left:461px;top:723px;width:38px;height:27px;line-height:27px;background:#fdfaf7;"><b class="t"><i class="n">0.95</i></b></div>
<div class="c pk" style="left:500px;top:723px;width:65px;height:27px;line-height:27px;background:#fdfaf7;"><b class="t">平<i class="n">/</i>半</b></div>
<div class="c d" style="left:566px;top:723px;width:39px;height:27px;line-height:27px;background:#fdfaf7;"><b class="t"><i class="n">0.93</i></b></div>
<div class="c d" style="left:606px;top:723px;width:67px;height:27px;line-height:27px;background:#f0f8fc;"><b class="t"><i class="n">2.21</i></b></div>
<div class="c hb" style="left:674px;top:723px;width:54px;height:27px;line-height:27px;background:#f0f8fc;"><b class="t"><i class="n">3.57</i></b></div>
<div class="c d" style="left:729px;top:723px;width:54px;height:27px;line-height:27px;background:#f0f8fc;"><b class="t"><i class="n">3.10</i></b></div>
<div class="c" style="left:784px;top:723px;width:36px;height:27px;line-height:27px;background:#f0f0f0;"><b class="t"><span style="color:#007800">负</span></b></div>
<div class="c" style="left:821px;top:723px;width:35px;height:27px;line-height:27px;background:#f0f0f0;"><b class="t"><span style="color:#007800">输</span></b></div>
<div class="c" style="left:857px;top:723px;width:53px;height:27px;line-height:27px;background:#f0f0f0;"><b class="t"><span style="color:#ff0000">大</span></b></div>
<div class="c sm" style="left:2px;top:751px;width:908px;height:27px;line-height:27px;background:#ffffff;"><b class="t"></b></div>
<div class="a sx" style="left:293px;top:756px;color:#333;line-height:18px">近</div>
<div class="a sx" style="left:305px;top:756px;color:#ff0000;line-height:18px"><i class="n">10</i></div>
<div class="a sx" style="left:317px;top:756px;color:#333;line-height:18px">场<i class="n">,</i>胜<i class="n">2</i>平<i class="n">5</i>负<i class="n">3,</i></div>
<div class="a sx" style="left:397px;top:756px;color:#333;line-height:18px">胜率<i class="n">:</i></div>
<div class="a" style="left:425px;top:755px;width:35px;height:18px;background:#008000"></div>
<div class="a sx" style="left:430px;top:756px;color:#fff;line-height:18px">20%</div>
<div class="a sx" style="left:463px;top:756px;color:#333;line-height:18px">赢率<i class="n">:</i></div>
<div class="a sx" style="left:491px;top:756px;color:#3333ff;line-height:18px"><i class="n">40%</i></div>
<div class="a sx" style="left:519px;top:756px;color:#333;line-height:18px">大<i class="n">:</i></div>
<div class="a sx" style="left:535px;top:756px;color:#3333ff;line-height:18px"><i class="n">40%</i></div>
<div class="a sx" style="left:564px;top:756px;color:#333;line-height:18px">单率<i class="n">:</i></div>
<div class="a sx" style="left:593px;top:756px;color:#3333ff;line-height:18px"><i class="n">40%</i></div>
<div class="sel" style="left:481px;top:431px;width:60px;height:20px;font-size:13px;line-height:18px"><span style="left:4px;top:1px;"><i class="lat" style="font-style:normal">Crow*</i></span><svg style="left:44px;top:5px" width="10" height="8" viewBox="0 0 10 8"><path d="M1 1.5 L5 5.5 L9 1.5" fill="none" stroke="#000" stroke-width="2"/></svg></div>
<div class="sel" style="left:549px;top:431px;width:36px;height:20px;font-size:12px;line-height:18px"><span style="left:4px;top:1px;">终</span><svg style="left:20px;top:5px" width="10" height="8" viewBox="0 0 10 8"><path d="M1 1.5 L5 5.5 L9 1.5" fill="none" stroke="#000" stroke-width="2"/></svg></div>
<div class="sel" style="left:631px;top:431px;width:84px;height:20px;font-size:12px;line-height:18px"><span style="left:4px;top:1px;">胜平负均值</span><svg style="left:68px;top:5px" width="10" height="8" viewBox="0 0 10 8"><path d="M1 1.5 L5 5.5 L9 1.5" fill="none" stroke="#000" stroke-width="2"/></svg></div>
<div class="sel" style="left:722px;top:431px;width:36px;height:20px;font-size:12px;line-height:18px"><span style="left:4px;top:1px;">终</span><svg style="left:20px;top:5px" width="10" height="8" viewBox="0 0 10 8"><path d="M1 1.5 L5 5.5 L9 1.5" fill="none" stroke="#000" stroke-width="2"/></svg></div>
<div class="sel" style="left:823px;top:431px;width:48px;height:20px;font-size:12px;line-height:18px"><span style="left:4px;top:1px;">全场</span><svg style="left:32px;top:5px" width="10" height="8" viewBox="0 0 10 8"><path d="M1 1.5 L5 5.5 L9 1.5" fill="none" stroke="#000" stroke-width="2"/></svg></div>
<div class="a" style="left:1px;top:779px;width:910px;height:1px;background:#1b95d6"></div>
</body></html>
